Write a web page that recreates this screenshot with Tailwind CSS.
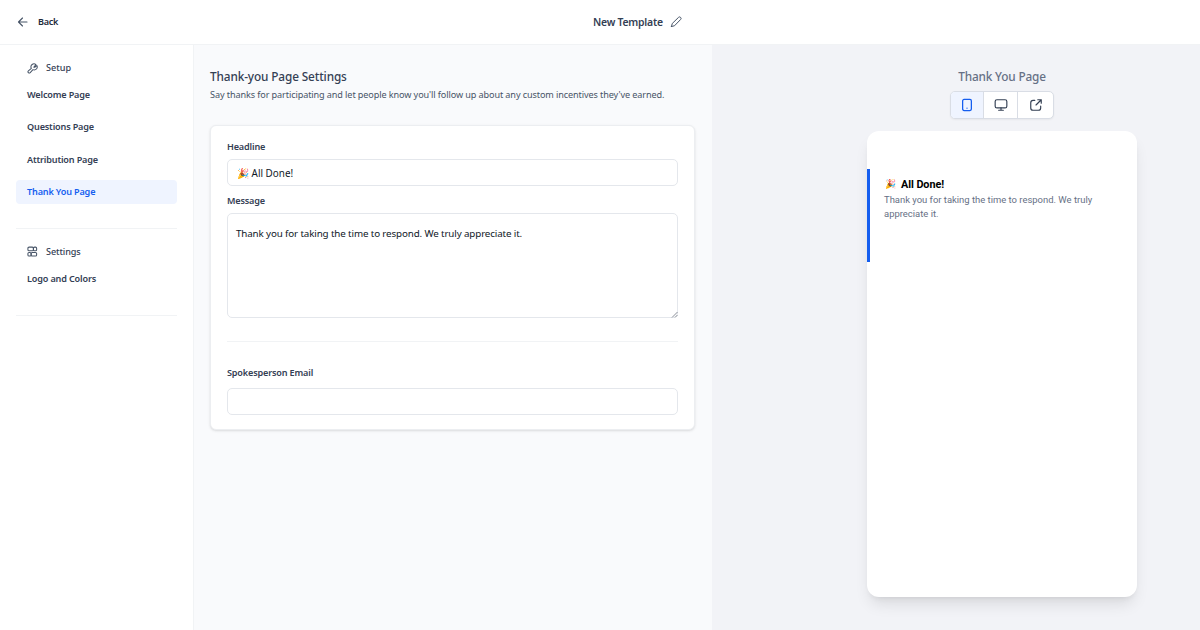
<!DOCTYPE html>
<html lang="en">
<head>
    <meta charset="UTF-8">
    <meta name="viewport" content="width=device-width, initial-scale=1.0">
    <title>New Template</title>
    <script src="https://cdn.jsdelivr.net/npm/@tailwindcss/browser@4"></script>
</head>
<body class="flex h-screen flex-col overflow-hidden bg-white font-['Noto_Sans',sans-serif] text-[9.1px] leading-4 tracking-[-0.16px] text-[#344054]">
    <!-- Top bar -->
    <header class="flex h-[45px] shrink-0 items-center border-b border-[#f1f3f5] px-[17px]">
        <a href="#" class="flex w-[576px] items-center gap-[9px] font-semibold tracking-[-0.3px] text-[#1d2939]">
            <svg class="size-3" viewBox="0 0 24 24" fill="none" stroke="#475467" stroke-width="2.2" stroke-linecap="round" stroke-linejoin="round"><path d="M20 12H3M11 4l-8 8 8 8"/></svg>
            Back
        </a>
        <div class="flex items-center gap-[7px] text-[10.4px] font-semibold tracking-[-0.23px]">
            New Template
            <svg class="size-3" viewBox="0 0 24 24" fill="none" stroke="#475467" stroke-width="2" stroke-linecap="round" stroke-linejoin="round"><path d="M3 21l1.500-6L17 2.800a2.500 2.500 0 0 1 4.200 4.200L9 19.500 3 21z"/></svg>
        </div>
    </header>

    <div class="flex min-h-0 flex-1">
        <!-- Sidebar -->
        <nav class="w-[194px] shrink-0 border-r border-[#f1f3f5] px-4 pt-[15px] font-semibold">
            <div class="flex h-4 items-center gap-2 px-[11px] font-medium tracking-normal">
                <svg class="size-[11px]" viewBox="0 0 24 24" fill="none" stroke="#475467" stroke-width="2.2" stroke-linecap="round" stroke-linejoin="round"><path d="M15 9l4.500-5.500A6.500 6.500 0 0 0 9.500 11.500L3 17a2.800 2.800 0 0 0 4 4l6-6.500A6.500 6.500 0 0 0 21.500 5.500l-4 3.500z"/></svg>
                Setup
            </div>
            <ul class="mt-[7px] space-y-[8.3px]">
                <li class="flex h-6 items-center rounded px-[11px]">Welcome Page</li>
                <li class="flex h-6 items-center rounded px-[11px]">Questions Page</li>
                <li class="flex h-6 items-center rounded px-[11px]">Attribution Page</li>
                <li class="flex h-6 items-center rounded bg-[#eff4ff] px-[11px] text-[#155eef]">Thank You Page</li>
            </ul>
            <hr class="mt-6 border-[#f1f3f5]">
            <div class="mt-[15px] flex h-4 items-center gap-2 px-[11px] font-medium tracking-[-0.1px]">
                <svg class="size-[11px]" viewBox="0 0 24 24" fill="none" stroke="#475467" stroke-width="2.3"><rect x="2" y="2.500" width="12" height="8" rx="2.500"/><rect x="14" y="2.500" width="7" height="8" rx="2.500"/><rect x="2" y="14" width="7" height="8" rx="2.500"/><rect x="9" y="14" width="12" height="8" rx="2.500"/></svg>
                Settings
            </div>
            <ul class="mt-[7px]">
                <li class="flex h-6 items-center rounded px-[11px]">Logo and Colors</li>
            </ul>
            <hr class="mt-6 border-[#f1f3f5]">
        </nav>

        <!-- Form -->
        <main class="w-[518px] shrink-0 bg-[#f9fafc] px-4 pt-[23px]">
            <h1 class="text-[11.8px] font-medium tracking-[-0.12px]">Thank-you Page Settings</h1>
            <p class="mt-[3px] whitespace-nowrap tracking-[-0.1px] text-[#475467]">Say thanks for participating and let people know you'll follow up about any custom incentives they've earned.</p>
            <form class="mt-[22px] h-[305px] w-[485px] rounded-md border border-[#eceef1] bg-white px-4 pt-[13px] shadow-sm">
                <label class="block font-semibold" for="headline">Headline</label>
                <input id="headline" class="mt-1 block h-[27px] w-full rounded-[5px] border border-[#e4e7ec] px-[9px] text-[9.9px] tracking-[0.01px] text-[#101828]" value="🎉 All Done!">
                <label class="mt-[7px] block font-semibold" for="message">Message</label>
                <div class="relative mt-1">
                    <textarea id="message" class="block h-[105px] w-full resize-none rounded-[5px] border border-[#e4e7ec] px-2 py-3 text-[9.8px] tracking-[-0.13px] text-[#101828]">Thank you for taking the time to respond. We truly appreciate it.</textarea>
                    <svg class="absolute right-0 bottom-0 size-[7px]" viewBox="0 0 7 7" stroke="#8a8f98"><path d="M1 6.500l5.500-5.500M4 6.500l2.500-2.500"/></svg>
                </div>
                <hr class="mt-[23px] border-[#f1f3f5]">
                <label class="mt-[23px] block font-semibold" for="email">Spokesperson Email</label>
                <input id="email" type="email" class="mt-[7px] block h-[27px] w-full rounded-[5px] border border-[#e4e7ec] px-[9px]">
            </form>
        </main>

        <!-- Preview -->
        <aside class="flex flex-1 flex-col items-center bg-[#f2f3f7] pt-[23px] pl-[92px]">
            <h2 class="text-[11.8px] font-medium text-[#667085]">Thank You Page</h2>
            <div class="mt-[7px] flex h-[28px] w-[104px] divide-x divide-[#d9dde5] overflow-hidden rounded-[5px] border border-[#d9dde5] bg-white shadow-xs">
                <button class="flex w-[33px] items-center justify-center bg-[#eff4ff]">
                    <svg class="size-[14px]" viewBox="0 0 24 24" fill="none" stroke="#155eef" stroke-width="2.2" stroke-linecap="round"><rect x="4.500" y="2.500" width="15" height="19" rx="2.500"/><path d="M12 17.500h.01"/></svg>
                </button>
                <button class="flex w-[34px] items-center justify-center">
                    <svg class="size-[14px]" viewBox="0 0 24 24" fill="none" stroke="#344054" stroke-width="2" stroke-linecap="round"><rect x="2" y="3" width="20" height="14" rx="3"/><path d="M8 21h8M12 17v4"/></svg>
                </button>
                <button class="flex flex-1 items-center justify-center">
                    <svg class="size-[14px]" viewBox="0 0 24 24" fill="none" stroke="#344054" stroke-width="2" stroke-linecap="round" stroke-linejoin="round"><path d="M21 9V3h-6M21 3l-9 9M10 4H7a4 4 0 0 0-4 4v9a4 4 0 0 0 4 4h9a4 4 0 0 0 4-4v-3"/></svg>
                </button>
            </div>
            <div class="mt-3 h-[466px] w-[270px] rounded-xl bg-white pt-[38px] shadow-lg">
                <div class="h-[93px] border-l-3 border-[#155eef] pt-2 pl-[14px] font-[Roboto,sans-serif] tracking-normal">
                    <h3 class="flex h-[15px] items-center gap-[5px] pl-[1px] text-[10.8px] leading-[15px] font-bold tracking-[-0.05px] text-black"><span class="text-[9px]">🎉</span>All Done!</h3>
                    <p class="mt-[1px] w-[225px] text-[9.45px] leading-[14px] text-[#667085]">Thank you for taking the time to respond. We truly appreciate it.</p>
                </div>
            </div>
        </aside>
    </div>
</body>
</html>
